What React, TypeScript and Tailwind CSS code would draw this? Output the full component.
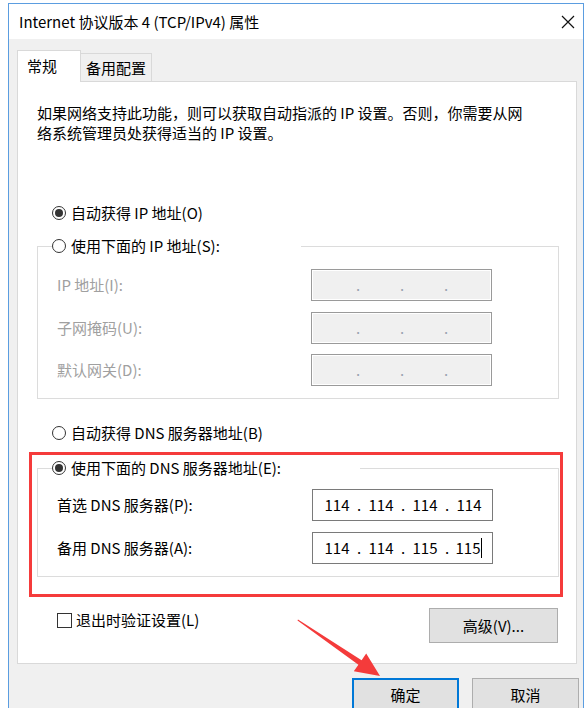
import React from 'react';

function Radio({ checked }: { checked?: boolean }) {
  return (
    <span className="w-[14px] h-[14px] rounded-full border border-[#333333] bg-white flex items-center justify-center shrink-0">
      {checked && <span className="w-[8px] h-[8px] rounded-full bg-[#333333]" />}
    </span>
  );
}

function IpBox({ parts, disabled, caret }: { parts: string[]; disabled?: boolean; caret?: boolean }) {
  const box = disabled
    ? 'bg-[#f0f0f0] border-[#9a9a9a] shadow-[inset_0_0_0_1px_#ffffff]'
    : 'bg-white border-[#7a7a7a]';
  return (
    <div className={`w-[181px] h-[32px] border flex items-center pl-[4px] text-[15px] leading-[20px] ${box}`}>
      {parts.map((p, i) => (
        <React.Fragment key={i}>
          {i > 0 && (
            <span className={`w-[4px] flex justify-center ${disabled ? 'text-[#9aa3b0]' : 'text-black'}`}>.</span>
          )}
          <span className="w-[40px] flex justify-center items-center text-black">
            {p}
            {caret && i === 3 && <span className="w-px h-[20px] bg-black ml-px" />}
          </span>
        </React.Fragment>
      ))}
    </div>
  );
}

function IpRow({ label, parts, disabled, caret, labelW }: { label: string; parts: string[]; disabled?: boolean; caret?: boolean; labelW: string }) {
  return (
    <div className="flex items-center">
      <span className={`${labelW} shrink-0 ${disabled ? 'text-[#a0a0a0]' : 'text-black'}`}>{label}</span>
      <IpBox parts={parts} disabled={disabled} caret={caret} />
    </div>
  );
}

export default function App() {
  const empty = ['', '', '', ''];
  return (
    <div className="relative w-[588px] h-[708px] bg-white overflow-hidden font-[family-name:'Noto_Sans_CJK_SC',sans-serif] text-[15px] leading-[20px] text-black">
      <div className="ml-[8px] mt-[3px] w-[576px] h-[705px] border-l border-t border-r border-[#5b9de0] flex flex-col">
        {/* title bar */}
        <div className="h-[35px] bg-white flex items-center justify-between pl-[10px] pr-[8px] shrink-0">
          <span className="text-[15px]">Internet 协议版本 4 (TCP/IPv4) 属性</span>
          <svg width="14" height="14" viewBox="0 0 14 14">
            <path d="M1 1L13 13M13 1L1 13" stroke="#111" strokeWidth="1.2" />
          </svg>
        </div>

        <div className="flex-1 bg-[#f0f0f0] pt-[11px] pl-[8px]">
          {/* tabs */}
          <div className="flex items-end">
            <div className="relative z-10 -mb-px h-[32px] w-[64px] bg-white border-t border-l border-r border-[#d9d9d9] pl-[9px] pt-[5px]">
              常规
            </div>
            <div className="-ml-px h-[28px] w-[72px] bg-[#f0f0f0] border-t border-r border-[#d9d9d9] pl-[6px] pt-[4px]">
              备用配置
            </div>
          </div>

          {/* panel */}
          <div className="w-[560px] h-[583px] bg-white border border-[#d9d9d9]">
            <p className="pl-[19px] pt-[21px] whitespace-nowrap">
              如果网络支持此功能，则可以获取自动指派的 IP 设置。否则，你需要从网
              <br />
              络系统管理员处获得适当的 IP 设置。
            </p>

            <div className="mt-[60px] ml-[34px] h-[20px] flex items-center gap-[5px]">
              <Radio checked />
              <span>自动获得 IP 地址(O)</span>
            </div>

            <fieldset className="mt-[13px] ml-[19px] w-[522px] border border-[#dcdcdc] pl-[19px] pt-[13px] pb-[12px]">
              <legend className="-ml-[5px] w-[249px] h-[20px] flex items-center gap-[5px]">
                <Radio />
                <span>使用下面的 IP 地址(S):</span>
              </legend>
              <IpRow label="IP 地址(I):" parts={empty} disabled labelW="w-[254px]" />
              <div className="mt-[11px]">
                <IpRow label="子网掩码(U):" parts={empty} disabled labelW="w-[254px]" />
              </div>
              <div className="mt-[10px]">
                <IpRow label="默认网关(D):" parts={empty} disabled labelW="w-[254px]" />
              </div>
            </fieldset>

            <div className="mt-[24px] ml-[34px] h-[20px] flex items-center gap-[5px]">
              <Radio />
              <span>自动获得 DNS 服务器地址(B)</span>
            </div>

            <div className="mt-[9px] ml-[11px] w-[534px] border-[3px] border-[#f53b3b] pl-[5px] pt-[3px] pb-[17px]">
              <fieldset className="w-[522px] border border-[#dcdcdc] pl-[19px] pt-[11px] pb-[12px]">
                <legend className="-ml-[5px] w-[308px] h-[20px] flex items-center gap-[5px]">
                  <Radio checked />
                  <span>使用下面的 DNS 服务器地址(E):</span>
                </legend>
                <IpRow label="首选 DNS 服务器(P):" parts={['114', '114', '114', '114']} labelW="w-[255px]" />
                <div className="mt-[11px]">
                  <IpRow label="备用 DNS 服务器(A):" parts={['114', '114', '115', '115']} caret labelW="w-[255px]" />
                </div>
              </fieldset>
            </div>

            <div className="mt-[11px] pl-[39px] pr-[18px] flex items-start justify-between">
              <div className="mt-[2px] h-[20px] flex items-center gap-[4px]">
                <span className="w-[15px] h-[15px] border border-[#333333] bg-white" />
                <span>退出时验证设置(L)</span>
              </div>
              <button className="w-[129px] h-[35px] bg-[#e1e1e1] border border-[#adadad] flex items-center justify-center">
                高级(V)...
              </button>
            </div>
          </div>

          {/* bottom buttons */}
          <div className="mt-[14px] pr-[4px] flex justify-end gap-[13px]">
            <button className="w-[107px] h-[34px] bg-[#e1e1e1] border-2 border-[#0078d7] flex items-center justify-center">
              确定
            </button>
            <button className="w-[107px] h-[34px] bg-[#e1e1e1] border border-[#adadad] flex items-center justify-center">
              取消
            </button>
          </div>
        </div>
      </div>

      {/* annotation arrow */}
      <svg className="absolute left-0 top-0 pointer-events-none" width="588" height="708" viewBox="0 0 588 708">
        <polygon
          points="298,619.5 361.6,660.2 366.2,653.6 380,676 353.8,671.2 358.4,664.8 297.5,620.5"
          fill="#f43b3b"
        />
      </svg>
    </div>
  );
}
